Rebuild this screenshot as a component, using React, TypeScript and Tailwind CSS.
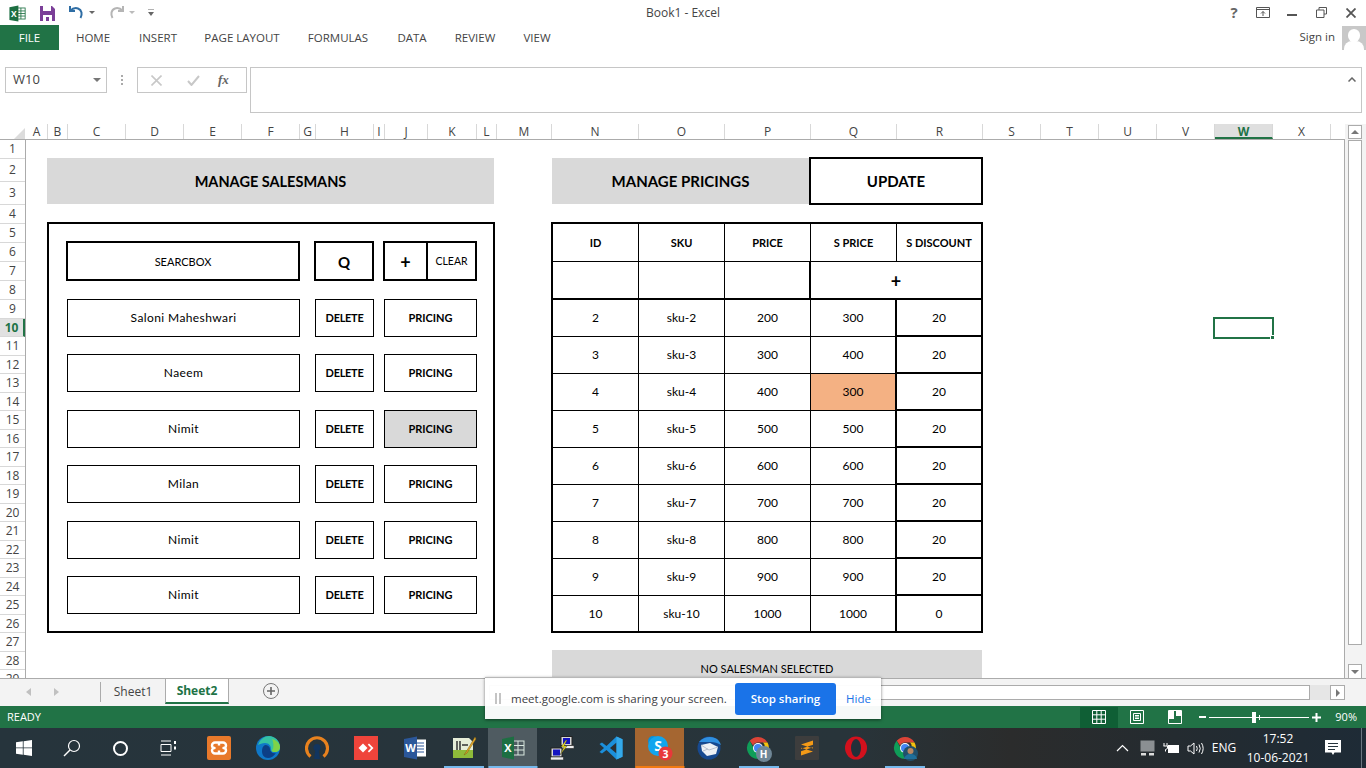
import type { ReactNode } from "react";

const COLUMNS: [string, number][] = [
  ["A", 22], ["B", 20], ["C", 58], ["D", 58], ["E", 58], ["F", 58], ["G", 16], ["H", 58],
  ["I", 11], ["J", 43], ["K", 49], ["L", 20], ["M", 55], ["N", 87], ["O", 86], ["P", 86],
  ["Q", 86], ["R", 86], ["S", 58], ["T", 58], ["U", 58], ["V", 58], ["W", 58], ["X", 58],
];

const ROW_HEIGHTS = [
  19, 23, 23, 19, 19, 19, 19, 19, 19, 18, 19, 18, 19, 18, 19, 18, 19, 18, 19, 18, 19, 18, 19, 18, 19,
  18, 19, 18, 19,
];

const SALESMEN = [
  { name: "Saloni Maheshwari", mt: "mt-[18px]" },
  { name: "Naeem", mt: "mt-[17px]" },
  { name: "Nimit", mt: "mt-[18px]", active: true },
  { name: "Milan", mt: "mt-[17px]" },
  { name: "Nimit", mt: "mt-[18px]" },
  { name: "Nimit", mt: "mt-[17px]" },
];

const PRICINGS = [
  ["2", "sku-2", "200", "300", "20"],
  ["3", "sku-3", "300", "400", "20"],
  ["4", "sku-4", "400", "300", "20"],
  ["5", "sku-5", "500", "500", "20"],
  ["6", "sku-6", "600", "600", "20"],
  ["7", "sku-7", "700", "700", "20"],
  ["8", "sku-8", "800", "800", "20"],
  ["9", "sku-9", "900", "900", "20"],
  ["10", "sku-10", "1000", "1000", "0"],
];

const TABS: [string, string][] = [
  ["HOME", "w-[68px]"],
  ["INSERT", "w-[62px]"],
  ["PAGE LAYOUT", "w-[106px]"],
  ["FORMULAS", "w-[86px]"],
  ["DATA", "w-[62px]"],
  ["REVIEW", "w-[64px]"],
  ["VIEW", "w-[60px]"],
];

function ExcelIcon({ size = 20 }: { size?: number }) {
  return (
    <svg width={size} height={size} viewBox="0 0 20 20">
      <rect x="9" y="3.5" width="10" height="13" fill="#fff" stroke="#217346" />
      <path d="M9 7h10M9 10h10M9 13h10M14 3.5v13" stroke="#217346" strokeWidth="1" />
      <path d="M0.5 2.5 11 0.5v19L0.5 17.5z" fill="#1d6f42" />
      <text x="5.6" y="13.6" textAnchor="middle" fontSize="10" fontWeight="700" fill="#fff" fontFamily="Open Sans">X</text>
    </svg>
  );
}

function WordIcon() {
  return (
    <svg width="24" height="24" viewBox="0 0 24 24">
      <rect x="10" y="3.5" width="13" height="17" fill="#fff" />
      <path d="M13 7h8M13 10h8M13 13h8M13 16h8" stroke="#2b579a" strokeWidth="1.2" />
      <path d="M1 3 14 0.5v23L1 21z" fill="#2b579a" />
      <text x="7.5" y="16" textAnchor="middle" fontSize="11" fontWeight="700" fill="#fff" fontFamily="Open Sans">W</text>
    </svg>
  );
}

function ChromeIcon() {
  return (
    <svg width="24" height="24" viewBox="0 0 24 24">
      <path d="M12 1a11 11 0 0 1 9.5 5.5H12a5.5 5.5 0 0 0-5 3L3.7 4.8A11 11 0 0 1 12 1z" fill="#db4437" />
      <path d="M21.5 6.5A11 11 0 0 1 12 23l4.8-8.2a5.5 5.5 0 0 0 .2-8.3z" fill="#f4c20d" />
      <path d="M12 23A11 11 0 0 1 3.7 4.8L8 12.8a5.5 5.5 0 0 0 6 4.5z" fill="#0f9d58" />
      <circle cx="12" cy="12" r="5" fill="#fff" />
      <circle cx="12" cy="12" r="4" fill="#4285f4" />
    </svg>
  );
}

function TaskbarIcons(): { node: ReactNode; under?: string; bg?: string }[] {
  return [
    {
      node: (
        <svg width="24" height="24" viewBox="0 0 24 24">
          <rect width="24" height="24" rx="2" fill="#e8792b" />
          <path d="M8 6.500h8a3 3 0 0 1 3 3v0a2.500 2.500 0 0 1-2.500 2.500A2.500 2.500 0 0 1 19 14.500v0a3 3 0 0 1-3 3H8a3 3 0 0 1-3-3v0A2.500 2.500 0 0 1 7.500 12 2.500 2.500 0 0 1 5 9.500v0a3 3 0 0 1 3-3zM12 6.500v3M12 14.500v3" fill="none" stroke="#fff" strokeWidth="2.400" strokeLinejoin="round" />
        </svg>
      ),
    },
    {
      node: (
        <svg width="24" height="24" viewBox="0 0 24 24">
          <circle cx="12" cy="12" r="12" fill="#0f78c8" />
          <path d="M2 9C4 3 9 0 13 0c6 0 11 5 11 11 0 3-2 5-5 5-3 0-4-1-4-3 0-3-2-6-6-6-3 0-5 1-7 2z" fill="#35c1a4" />
          <path d="M16 3c4 1 8 4 8 8 0 3-2 5-5 5-2 0-3-.5-3.500-1.500C18 14 18 7 16 3z" fill="#7ed348" />
          <path d="M9 9c3 0 5 2 5 4 0 3 3 5 6 4-2 3-5 5-8 5-4 0-6-3-6-7 0-3 1-5 3-6z" fill="#0c3f86" />
        </svg>
      ),
    },
    {
      node: (
        <svg width="24" height="24" viewBox="0 0 24 24">
          <path d="M5.500 20.500A10.500 10.500 0 1 1 18.500 20.500" fill="none" stroke="#e8821e" strokeWidth="3.200" />
          <circle cx="12" cy="11.500" r="3.600" fill="#12355f" />
          <path d="M10.500 13h3l1.500 10H9z" fill="#12355f" />
        </svg>
      ),
    },
    {
      node: (
        <svg width="24" height="24" viewBox="0 0 24 24">
          <rect width="24" height="24" fill="#ef443b" />
          <path d="M9 7.500 13.500 12 9 16.500 4.500 12z" fill="#fff" />
          <path d="M15 7.500 19.500 12 15 16.500l-1.200-1.200L17 12l-3.200-3.300z" fill="#fff" />
        </svg>
      ),
    },
    { node: <WordIcon /> },
    {
      under: "w-[40px]",
      node: (
        <svg width="26" height="26" viewBox="0 0 26 26">
          <path d="M2 3h16l4 4v16H2z" fill="#e6edd8" />
          <rect x="2" y="15" width="20" height="8" fill="#8fbb3a" />
          <path d="M6 6v9M9 6v9M11 10h6" stroke="#333" strokeWidth="1.500" />
          <path d="M24 2 15 17l-2 3 3-2L25 4z" fill="#e3a82c" stroke="#7a5a10" strokeWidth=".5" />
        </svg>
      ),
    },
    {
      under: "w-full",
      bg: "bg-[#4f5b61]",
      node: (
        <svg width="24" height="24" viewBox="0 0 24 24">
          <rect x="11" y="5" width="12" height="14" fill="none" stroke="#d9e8df" />
          <path d="M11 9.500h12M11 14h12M17 5v14" stroke="#d9e8df" />
          <path d="M1 3 13 .5v23L1 21z" fill="#1d6f42" />
          <text x="7" y="16" textAnchor="middle" fontSize="11" fontWeight="700" fill="#fff" fontFamily="Open Sans">X</text>
        </svg>
      ),
    },
    {
      node: (
        <svg width="24" height="24" viewBox="0 0 24 24">
          <rect x="11" y="0.500" width="11" height="9" fill="#d8d8d8" stroke="#222" />
          <rect x="13" y="2" width="7" height="6" fill="#1313c0" />
          <rect x="1" y="12" width="11" height="9" fill="#d8d8d8" stroke="#222" />
          <rect x="3" y="13.500" width="7" height="6" fill="#1313c0" />
          <rect x="0.500" y="21" width="13" height="3" fill="#eee" stroke="#222" strokeWidth=".6" />
          <rect x="12" y="9.500" width="12" height="3" fill="#eee" stroke="#222" strokeWidth=".6" />
          <path d="M16 4 11 11h3l-4 8 7-9h-3l3-6z" fill="#f4e61a" stroke="#333" strokeWidth=".4" />
        </svg>
      ),
    },
    {
      node: (
        <svg width="24" height="24" viewBox="0 0 24 24">
          <path d="M17.500 0.500 7.500 10 3 6.500 0.500 8 5 12 .5 16 3 17.500 7.500 14l10 9.500 6-2.800V3.300z" fill="#1b8fdb" />
          <path d="M17.500 6.500 11 12l6.500 5.500z" fill="#2b2f33" />
          <path d="M17.500 0.500 23.500 3.300v17.400l-6 2.800z" fill="#34a9ea" />
        </svg>
      ),
    },
    {
      under: "w-full bg-[#f27a12]",
      bg: "bg-[#a56631]",
      node: (
        <svg width="26" height="26" viewBox="0 0 26 26">
          <circle cx="6" cy="6" r="5" fill="#0a8fd8" />
          <circle cx="11" cy="11" r="10" fill="#12a5ee" />
          <text x="11" y="16" textAnchor="middle" fontSize="14" fontWeight="700" fill="#fff" fontFamily="Open Sans">S</text>
          <circle cx="18.500" cy="18.500" r="7" fill="#e8383a" />
          <text x="18.500" y="22.500" textAnchor="middle" fontSize="10.500" fontWeight="700" fill="#fff" fontFamily="Open Sans">3</text>
        </svg>
      ),
    },
    {
      node: (
        <svg width="24" height="24" viewBox="0 0 24 24">
          <circle cx="12" cy="12" r="11.500" fill="#17498f" />
          <path d="M2 6C6 1 13 0 18 2c3 1 5 4 6 7-3-2-7-3-10-3-4 0-8 0-12 0z" fill="#2f8fe0" />
          <path d="M4 9l9-2 8 4-2 7-9 2-5-5z" fill="#eef1f5" />
          <path d="M4 9l8 5 9-3M6 15l5-2" fill="none" stroke="#a9b4c4" strokeWidth=".8" />
        </svg>
      ),
    },
    {
      under: "w-[40px] ml-[1px]",
      node: (
        <div className="relative w-[24px] h-[24px]">
          <ChromeIcon />
          <div className="absolute left-[10px] top-[10px] w-[16px] h-[16px] rounded-full bg-[#6f8797] flex items-center justify-center text-[10px] font-bold text-white leading-none">H</div>
        </div>
      ),
    },
    {
      node: (
        <svg width="24" height="24" viewBox="0 0 24 24">
          <rect width="24" height="24" rx="1" fill="#3d3d3d" />
          <path d="M18 4.500 6 8.500v4.200l12-4zM18 11.300 6 15.300v4.200l12-4z M6 8.500l12 4v3l-12-3.800z" fill="#f59a17" />
        </svg>
      ),
    },
    {
      node: (
        <svg width="24" height="24" viewBox="0 0 24 24">
          <ellipse cx="12" cy="12" rx="11" ry="11.500" fill="#d2111d" />
          <ellipse cx="12" cy="12" rx="5" ry="9" fill="#23303a" />
        </svg>
      ),
    },
    {
      under: "w-[40px]",
      node: (
        <div className="relative w-[24px] h-[24px]">
          <ChromeIcon />
          <svg className="absolute left-[10px] top-[10px]" width="15" height="15" viewBox="0 0 15 15">
            <circle cx="7.500" cy="7.500" r="7.500" fill="#21506b" />
            <circle cx="7.500" cy="5" r="3" fill="#b98762" />
            <path d="M1 13c1-4 4-5 6.500-5s6 1 6.500 5z" fill="#1f6f9a" />
          </svg>
        </div>
      ),
    },
  ];
}

function Cell({ children, className = "" }: { children?: ReactNode; className?: string }) {
  return <div className={`flex items-center justify-center text-black ${className}`}>{children}</div>;
}

function SalesmenPanel() {
  return (
    <div className="w-[448px] shrink-0">
      <div className="h-[46px] w-[447px] bg-[#d9d9d9] flex items-center justify-center pt-[2px] text-[14.500px] font-bold text-black">MANAGE SALESMANS</div>
      <div className="mt-[18px] h-[411px] border-2 border-black pl-[17px] pt-[17px]">
        <div className="flex h-[40px]">
          <Cell className="w-[234px] border-2 border-black pt-[2px] text-[11px]">SEARCBOX</Cell>
          <Cell className="ml-[14px] w-[60px] border-2 border-black pt-[2px] text-[15px] font-bold">Q</Cell>
          <div className="ml-[9px] w-[94px] flex border-2 border-black">
            <Cell className="w-[43px] border-r-2 border-black pt-[2px] text-[18px] font-bold">+</Cell>
            <Cell className="flex-1 pt-[2px] text-[10.500px]">CLEAR</Cell>
          </div>
        </div>
        {SALESMEN.map((s, i) => (
          <div key={i} className={`flex h-[38px] ml-px ${s.mt}`}>
            <Cell className="w-[233px] border border-black text-[12px] tracking-[0.4px]">{s.name}</Cell>
            <Cell className="ml-[15px] w-[59px] border border-black text-[11px] tracking-[-0.3px] font-bold">DELETE</Cell>
            <Cell className={`ml-[10px] w-[93px] border border-black text-[11px] font-bold ${s.active ? "bg-[#d9d9d9]" : ""}`}>PRICING</Cell>
          </div>
        ))}
      </div>
    </div>
  );
}

function PricingsPanel() {
  return (
    <div className="ml-[56px] w-[432px] shrink-0">
      <div className="flex h-[46px]">
        <div className="ml-px w-[257px] bg-[#d9d9d9] flex items-center justify-center text-[15px] font-bold text-black">MANAGE PRICINGS</div>
        <Cell className="-my-px w-[174px] h-[48px] border-2 border-black text-[15px] font-bold">UPDATE</Cell>
      </div>
      <div className="mt-[18px] h-[411px] border-2 border-black text-[12px]">
        <div className="flex h-[38px] border-b border-black text-[11px] font-bold">
          <Cell className="w-[86px] border-r border-black pt-[2px]">ID</Cell>
          <Cell className="w-[86px] border-r border-black pt-[2px]">SKU</Cell>
          <Cell className="w-[86px] border-r border-black pt-[2px]">PRICE</Cell>
          <Cell className="w-[86px] border-r border-black pt-[2px]">S PRICE</Cell>
          <Cell className="flex-1 pt-[2px]">S DISCOUNT</Cell>
        </div>
        <div className="flex h-[38px] border-b-2 border-black">
          <Cell className="w-[86px] border-r border-black" />
          <Cell className="w-[86px] border-r border-black" />
          <Cell className="w-[84px] border-r-0" />
          <Cell className="flex-1 border-l-2 border-black pt-[3px] text-[18px] font-bold">+</Cell>
        </div>
        {PRICINGS.map((row, i) => {
          const last = i === PRICINGS.length - 1;
          const bottom = last ? "" : "border-b border-black";
          return (
            <div key={row[0]} className={`flex ${last ? "h-[35px]" : "h-[37px]"}`}>
              <Cell className={`w-[86px] border-r border-black ${bottom}`}>{row[0]}</Cell>
              <Cell className={`w-[86px] border-r border-black ${bottom}`}>{row[1]}</Cell>
              <Cell className={`w-[86px] border-r border-black ${bottom}`}>{row[2]}</Cell>
              <Cell className={`w-[84px] ${bottom} ${i === 2 ? "bg-[#f4b183]" : ""}`}>{row[3]}</Cell>
              <Cell className={`flex-1 border-l-2 border-black ${last ? "" : "border-b-2"}`}>{row[4]}</Cell>
            </div>
          );
        })}
      </div>
      <div className="mt-[17px] ml-px h-[40px] w-[430px] bg-[#d9d9d9] flex justify-center pt-[11px] text-[11px] text-black">NO SALESMAN SELECTED</div>
    </div>
  );
}

function SheetGrid() {
  return (
    <div className="flex-1 min-w-0 flex flex-col">
      <div className="flex h-[15px] shrink-0 text-[12px] leading-[15px] text-[#444]">
        <div className="w-[26px] shrink-0 flex items-end justify-end pr-[1px]">
          <svg width="12" height="12" viewBox="0 0 12 12"><path d="M12 1v11H1z" fill="#dcdcdc" /></svg>
        </div>
        {COLUMNS.map(([name, w]) => {
          const on = name === "W";
          return (
            <div
              key={name}
              style={{ width: w }}
              className={`shrink-0 text-center border-r border-[#d8d8d8] ${on ? "bg-[#dfdfdf] border-b-2 border-b-[#217346] font-bold text-[#217346]" : ""}`}
            >
              {name}
            </div>
          );
        })}
      </div>
      <div className="flex-1 min-h-0 flex border-t border-[#ababab] border-r">
        <div className="w-[26px] shrink-0 overflow-hidden border-r border-[#ababab] text-[12px] text-[#444]">
          {ROW_HEIGHTS.map((h, i) => {
            const on = i === 9;
            return (
              <div
                key={i}
                style={{ height: h }}
                className={`flex items-center justify-center border-b border-[#d8d8d8] ${on ? "bg-[#e1e1e1] border-r-2 border-r-[#217346] font-bold text-[#217346]" : ""}`}
              >
                {i + 1}
              </div>
            );
          })}
        </div>
        <div className="relative flex-1 overflow-hidden pl-[21px] pt-[18px] flex items-start font-['Lato',sans-serif]">
          <SalesmenPanel />
          <PricingsPanel />
          <div className="absolute left-[1187px] top-[177px] w-[61px] h-[22px] border-2 border-[#217346]">
            <div className="absolute -right-[3px] -bottom-[3px] w-[5px] h-[5px] bg-[#217346] border border-white" />
          </div>
        </div>
      </div>
    </div>
  );
}

function ScrollBar() {
  return (
    <div className="w-[21px] shrink-0 bg-[#f3f3f3] pl-[3px] pr-[4px] pt-[1px] flex flex-col">
      <div className="h-[14px] border border-[#ababab] bg-white flex items-center justify-center">
        <div className="border-x-[4px] border-x-transparent border-b-[4px] border-b-[#777]" />
      </div>
      <div className="h-[505px] border border-[#ababab] bg-white mt-px" />
      <div className="mt-auto mb-[-1px] h-[15px] border border-[#ababab] bg-white flex items-center justify-center">
        <div className="border-x-[4px] border-x-transparent border-t-[4px] border-t-[#777]" />
      </div>
    </div>
  );
}

function TabStrip() {
  return (
    <div className="h-[28px] shrink-0 bg-[#f3f3f3] border-t border-[#ababab] flex text-[12px] leading-none text-[#444]">
      <div className="w-[101px] shrink-0 flex items-center pl-[26px] gap-[23px] border-r border-[#ababab] h-[20px] mt-[3px]">
        <div className="border-y-[4px] border-y-transparent border-r-[5px] border-r-[#c0c0c0]" />
        <div className="border-y-[4px] border-y-transparent border-l-[5px] border-l-[#c0c0c0]" />
      </div>
      <div className="w-[64px] h-[25px] flex items-center justify-center">Sheet1</div>
      <div className="w-[64px] h-[25px] bg-white border-x border-[#ababab] border-b-2 border-b-[#217346] flex items-center justify-center font-bold text-[#217346]">Sheet2</div>
      <div className="ml-[34px] mt-[4px] w-[16px] h-[16px] rounded-full border border-[#777] flex items-center justify-center">
        <svg width="10" height="10" viewBox="0 0 10 10"><path d="M5 1v8M1 5h8" stroke="#666" strokeWidth="1.600" /></svg>
      </div>
      <div className="ml-[210px] mt-[6px] flex h-[15px]">
        <div className="w-[821px] bg-white border border-[#ababab]" />
        <div className="w-[20px] bg-[#e6e6e6]" />
        <div className="w-[15px] bg-white border border-[#ababab] flex items-center justify-center">
          <div className="border-y-[4px] border-y-transparent border-l-[4px] border-l-[#777]" />
        </div>
      </div>
    </div>
  );
}

function StatusBar() {
  return (
    <div className="h-[22px] shrink-0 bg-[#217346] flex items-center text-white text-[11px]">
      <div className="pl-[7px]">READY</div>
      <div className="ml-auto flex items-center h-full">
        <div className="w-[38px] h-[21px] bg-[#0f5f35] flex items-center justify-center">
          <svg width="14" height="14" viewBox="0 0 14 14"><path d="M.5.500h13v13H.5zM.5 4.800h13M.5 9.200h13M4.800.500v13M9.200.500v13" fill="none" stroke="#fff" /></svg>
        </div>
        <div className="w-[38px] flex justify-center">
          <svg width="14" height="14" viewBox="0 0 14 14"><path d="M.5.500h13v13H.5zM3.500 3.500h7v7h-7zM5 5.500h4M5 7h4M5 8.500h4" fill="none" stroke="#fff" /></svg>
        </div>
        <div className="w-[38px] flex justify-center">
          <svg width="14" height="14" viewBox="0 0 14 14"><path d="M.5.500h13v13H.5z" fill="none" stroke="#fff" /><path d="M1 1h5v8H1zM8 1h5v5H8z" fill="#fff" /></svg>
        </div>
        <div className="ml-[5px] w-[7px] h-[2px] bg-white" />
        <div className="relative ml-[3px] w-[100px] h-[1px] bg-white">
          <div className="absolute left-[43px] -top-[5px] w-[4px] h-[11px] bg-white" />
          <div className="absolute left-[50px] -top-[2px] w-px h-[5px] bg-white" />
        </div>
        <svg className="ml-[3px]" width="9" height="9" viewBox="0 0 9 9"><path d="M4.500 0v9M0 4.500h9" stroke="#fff" strokeWidth="2" /></svg>
        <div className="w-[45px] pr-[9px] text-right">90%</div>
      </div>
    </div>
  );
}

function Taskbar() {
  return (
    <div className="h-[40px] shrink-0 flex items-center text-white bg-[linear-gradient(to_right,#26343c_0%,#28343a_62%,#2b2c2c_74%,#242b30_86%,#1e2b36_100%)]">
      <div className="w-[48px] h-full flex items-center justify-center">
        <svg width="16" height="16" viewBox="0 0 16 16"><path d="M0 2.300 6.800 1.300v6.200H0zM7.600 1.200 16 0v7.500H7.600zM0 8.300h6.800v6.400L0 13.700zM7.600 8.300H16V16l-8.400-1.200z" fill="#fff" /></svg>
      </div>
      <div className="w-[48px] h-full flex items-center justify-center">
        <svg width="18" height="18" viewBox="0 0 18 18"><circle cx="11" cy="7" r="5.500" fill="none" stroke="#fff" strokeWidth="1.200" /><path d="M7 11 1 17" stroke="#fff" strokeWidth="1.400" /></svg>
      </div>
      <div className="w-[48px] h-full flex items-center justify-center">
        <div className="w-[15px] h-[15px] rounded-full border-[2.500px] border-white" />
      </div>
      <div className="w-[48px] h-full flex items-center justify-center">
        <svg width="17" height="16" viewBox="0 0 17 16"><path d="M1 1h10M1 15h10M1 4.500h10v7H1z" fill="none" stroke="#fff" /><path d="M14 1h2v3h-2zM14 6.500h2v3h-2z" fill="#fff" /></svg>
      </div>
      <div className="flex h-full ml-[2px]">
        {TaskbarIcons().map((it, i) => (
          <div key={i} className={`relative w-[49px] h-full flex items-center justify-center ${it.bg ?? ""}`}>
            {it.node}
            {it.under && <div className={`absolute bottom-0 left-1/2 -translate-x-1/2 h-[2px] bg-[#76b9ed] ${it.under}`} />}
          </div>
        ))}
      </div>
      <div className="ml-auto flex items-center h-full">
        <svg width="13" height="8" viewBox="0 0 13 8"><path d="M1 7 6.500 1.500 12 7" fill="none" stroke="#fff" strokeWidth="1.200" /></svg>
        <svg className="ml-[11px]" width="15" height="16" viewBox="0 0 15 16"><rect x="0.500" y="0.500" width="14" height="11" fill="#8b8f92" /><path d="M1 13h5v2.500H1zM9 13h5v2.500H9z" fill="#dcdcdc" /></svg>
        <svg className="ml-[8px]" width="17" height="11" viewBox="0 0 17 11"><rect x="5" y="2" width="11" height="8" fill="#fff" /><path d="M1 0v3M4 0v3M.5 3h4v2.500l-2 1v2" fill="none" stroke="#fff" /></svg>
        <svg className="ml-[7px]" width="17" height="13" viewBox="0 0 17 13"><path d="M1 4h2.500L7 1v11L3.500 9H1zM9.500 4q1.500 2.500 0 5M12 2.500q2.500 4 0 8M14.500 1q3.300 5.500 0 11" fill="none" stroke="#fff" /></svg>
        <div className="ml-[5px] w-[30px] text-center text-[12px]">ENG</div>
        <div className="ml-[4px] w-[70px] text-center text-[12px] leading-[19px] whitespace-nowrap">
          <div>17:52</div>
          <div>10-06-2021</div>
        </div>
        <div className="w-[40px] flex justify-center">
          <svg width="16" height="16" viewBox="0 0 16 16"><path d="M0 0h16v12.500H9.500L8 15 6.500 12.500H0z" fill="#fff" /><path d="M3 3.500h10M3 6.500h10M3 9.500h7" stroke="#26343c" /></svg>
        </div>
        <div className="ml-[8px] w-[5px] h-full border-l border-[#6a7680]" />
      </div>
    </div>
  );
}

export default function App() {
  return (
    <div className="relative w-[1366px] h-[768px] overflow-hidden bg-white flex flex-col font-['Open_Sans',sans-serif]">
      <div className="h-[25px] shrink-0 flex items-center text-[#444]">
        <div className="ml-[9px] mt-[2px]"><ExcelIcon size={17} /></div>
        <svg className="ml-[14px] mt-[1px]" width="15" height="15" viewBox="0 0 15 15">
          <path d="M0 0h12l3 3v12H0z" fill="#7b3f98" />
          <path d="M3 0h8v5H3z" fill="#fff" />
          <path d="M3 9h9v6H3z" fill="#fff" />
          <path d="M6 11h3v4H6z" fill="#7b3f98" />
        </svg>
        <svg className="ml-[14px]" width="15" height="15" viewBox="0 0 15 15"><path d="M1 1v5h5M1 6q4-4 8-2.500c4 1.500 4.500 6 2.500 9.500" fill="none" stroke="#2e6da4" strokeWidth="2" /></svg>
        <div className="ml-[5px] border-x-[3px] border-x-transparent border-t-[3px] border-t-[#666]" />
        <svg className="ml-[14px]" width="15" height="15" viewBox="0 0 15 15"><path d="M14 1v5H9M14 6q-4-4-8-2.500C2 5 1.500 9.500 3.500 13" fill="none" stroke="#b5b5b5" strokeWidth="2" /></svg>
        <div className="ml-[5px] border-x-[3px] border-x-transparent border-t-[3px] border-t-[#bbb]" />
        <svg className="ml-[13px]" width="6" height="7" viewBox="0 0 6 7"><path d="M0 0h6" stroke="#666" /><path d="M0 3h6L3 7z" fill="#666" /></svg>
        <div className="absolute left-[646px] top-[4px] text-[12px] leading-[17px]">Book1 - Excel</div>
        <div className="ml-auto flex items-center">
          <div className="w-[30px] text-center text-[15px] font-bold text-[#666]">?</div>
          <svg width="14" height="11" viewBox="0 0 14 11" className="mx-[7px]"><path d="M.5.500h13v10H.5zM.5 2.500h13M7 9V4.500M5 6.500l2-2 2 2" fill="none" stroke="#555" /></svg>
          <div className="ml-[10px] w-[10px] h-[2px] bg-[#555] mt-[4px]" />
          <svg className="ml-[19px]" width="11" height="11" viewBox="0 0 11 11"><path d="M3 3V.5h7.500V7H8M.5 3H8v7.500H.5z" fill="none" stroke="#555" /></svg>
          <svg className="ml-[19px] mr-[10px]" width="10" height="10" viewBox="0 0 10 10"><path d="M.5.500l9 9M9.500.500l-9 9" stroke="#555" strokeWidth="1.800" /></svg>
        </div>
      </div>
      <div className="h-[25px] shrink-0 flex items-center text-[11.500px] text-[#444]">
        <div className="w-[59px] h-full bg-[#217346] text-white flex items-center justify-center">FILE</div>
        {TABS.map(([t, w]) => (
          <div key={t} className={`${w} text-center`}>{t}</div>
        ))}
        <div className="ml-auto flex items-center h-full">
          <span className="-mt-[2px]">Sign in</span>
          <div className="ml-[7px] w-[24px] h-[24px] bg-[#c8c8c8] overflow-hidden relative">
            <div className="absolute left-[6px] top-[3px] w-[12px] h-[13px] rounded-full bg-white" />
            <div className="absolute left-[2px] top-[15px] w-[20px] h-[14px] rounded-t-[8px] bg-white" />
          </div>
        </div>
      </div>
      <div className="mt-[17px] h-[46px] shrink-0 flex items-start text-[#444]">
        <div className="ml-[5px] w-[102px] h-[26px] border border-[#c6c6c6] flex items-center justify-between pl-[7px] pr-[5px] text-[13px]">
          W10
          <div className="border-x-[4px] border-x-transparent border-t-[4px] border-t-[#777]" />
        </div>
        <div className="w-[30px] h-[26px] flex flex-col items-center justify-center gap-[2px]">
          <div className="w-[2px] h-[2px] bg-[#aaa]" />
          <div className="w-[2px] h-[2px] bg-[#aaa]" />
          <div className="w-[2px] h-[2px] bg-[#aaa]" />
        </div>
        <div className="w-[110px] h-[26px] border border-[#c6c6c6] flex items-center">
          <svg className="ml-[13px]" width="11" height="11" viewBox="0 0 11 11"><path d="M.5.500l10 10M10.500.500l-10 10" stroke="#c8c8c8" strokeWidth="1.600" /></svg>
          <svg className="ml-[25px]" width="13" height="11" viewBox="0 0 13 11"><path d="M1 6l3.500 4L12 1" fill="none" stroke="#c8c8c8" strokeWidth="2" /></svg>
          <span className="ml-[18px] font-['Liberation_Serif',serif] italic font-bold text-[13px] text-[#666]">fx</span>
        </div>
        <div className="ml-[3px] w-[1112px] h-[46px] border border-[#c6c6c6] flex justify-end pt-[9px] pr-[5px]">
          <svg width="8" height="5" viewBox="0 0 8 5"><path d="M.5 4.500 4 1l3.500 3.500" fill="none" stroke="#666" strokeWidth="1.500" /></svg>
        </div>
      </div>
      <div className="mt-[11px] h-[554px] shrink-0 flex">
        <SheetGrid />
        <ScrollBar />
      </div>
      <TabStrip />
      <StatusBar />
      <Taskbar />
      <div className="absolute left-[485px] top-[677px] w-[396px] h-[42px] bg-white/[0.96] border-t border-[#b8b8b8] shadow-[0_1px_3px_rgba(0,0,0,0.5)] flex items-center text-[11.500px]">
        <div className="ml-[10px] w-[6px] h-[11px] border-x-2 border-[#c4c4c4]" />
        <span className="ml-[10px] text-[#3c4043] whitespace-nowrap">meet.google.com is sharing your screen.</span>
        <div className="absolute left-[250px] top-[5px] w-[101px] h-[32px] rounded-[3px] bg-[#1a73e8] flex items-center justify-center text-white font-semibold">Stop sharing</div>
        <span className="absolute left-[361px] text-[#1a73e8]">Hide</span>
      </div>
    </div>
  );
}
